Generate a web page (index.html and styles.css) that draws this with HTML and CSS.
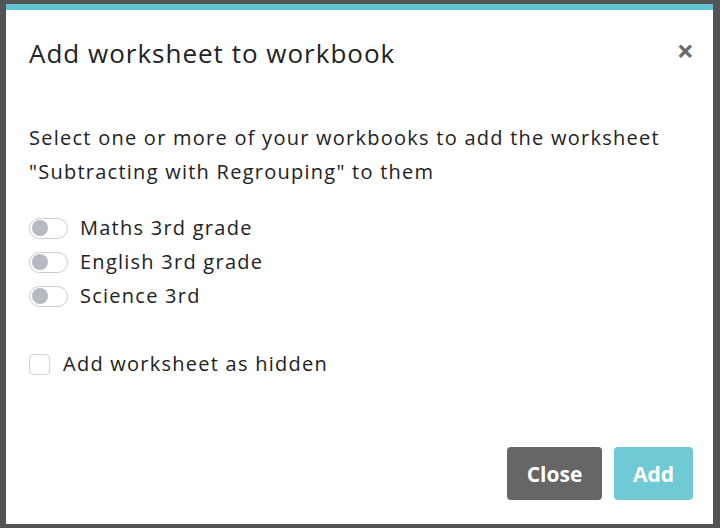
FILE: index.html
```html
<!DOCTYPE html>
<html lang="en">
<head>
<meta charset="utf-8">
<title>Add worksheet to workbook</title>
<link rel="stylesheet" href="styles.css">
</head>
<body>
<div class="backdrop">
  <div class="modal">
    <div class="modal-header">
      <h2 class="modal-title">Add worksheet to workbook</h2>
      <span class="close-x">&times;</span>
    </div>
    <div class="modal-body">
      <p class="intro">Select one or more of your workbooks to add the worksheet "Subtracting with Regrouping" to them</p>
      <ul class="switches">
        <li class="switch-row"><span class="switch"><span class="knob"></span></span><span class="switch-label">Maths 3rd grade</span></li>
        <li class="switch-row"><span class="switch"><span class="knob"></span></span><span class="switch-label">English 3rd grade</span></li>
        <li class="switch-row"><span class="switch"><span class="knob"></span></span><span class="switch-label">Science 3rd</span></li>
      </ul>
      <div class="check-row"><span class="checkbox"></span><span class="check-label">Add worksheet as hidden</span></div>
    </div>
    <div class="modal-footer">
      <button class="btn btn-close">Close</button>
      <button class="btn btn-add">Add</button>
    </div>
  </div>
</div>
</body>
</html>
```
FILE: styles.css
```css
html, body {
  margin: 0;
  padding: 0;
  height: 100%;
}
body {
  background: #545454;
  font-family: "Open Sans", "DejaVu Sans", sans-serif;
  color: #222;
}
.backdrop {
  height: 528px;
  padding: 4px 7px 4px 6px;
  box-sizing: border-box;
}
.modal {
  background: #fff;
  border-top: 6px solid #5ec4d2;
  height: 520px;
  box-sizing: border-box;
  display: flex;
  flex-direction: column;
}
.modal-header {
  display: flex;
  align-items: center;
  justify-content: space-between;
  padding: 24px 19px 0 23px;
}
.modal-title {
  margin: 0;
  font-size: 26px;
  font-weight: 400;
  letter-spacing: 1px;
  line-height: 38px;
  color: #222;
}
.close-x {
  font-size: 30px;
  font-weight: 700;
  color: #6b6b6b;
  line-height: 30px;
  margin-top: -4px;
}
.modal-body {
  padding: 49px 23px 0 23px;
}
.intro {
  margin: 0;
  font-size: 20px;
  letter-spacing: 1.25px;
  line-height: 34px;
  max-width: 660px;
}
.switches {
  list-style: none;
  margin: 22px 0 0;
  padding: 0;
}
.switch-row {
  display: flex;
  align-items: center;
  height: 34px;
}
.switch {
  width: 39px;
  height: 21px;
  box-sizing: border-box;
  border: 1px solid #c9ccd1;
  border-radius: 11px;
  display: flex;
  align-items: center;
  padding-left: 2px;
  margin-right: 12px;
}
.knob {
  width: 16px;
  height: 16px;
  border-radius: 50%;
  background: #b5b9c1;
}
.switch-label, .check-label {
  font-size: 20px;
  letter-spacing: 1.25px;
  line-height: 34px;
}
.check-row {
  display: flex;
  align-items: center;
  height: 34px;
  margin-top: 34px;
}
.checkbox {
  width: 21px;
  height: 21px;
  box-sizing: border-box;
  border: 1px solid #cfd2d6;
  border-radius: 4px;
  margin-right: 13px;
}
.modal-footer {
  margin-top: auto;
  display: flex;
  justify-content: flex-end;
  gap: 12px;
  padding: 0 20px 24px 0;
}
.btn {
  border: none;
  border-radius: 4px;
  height: 53px;
  font-family: "Open Sans", "DejaVu Sans", sans-serif;
  font-size: 21px;
  font-weight: 700;
  color: #fff;
  padding: 0 18px;
}
.btn-close {
  background: #666666;
  width: 95px;
}
.btn-add {
  background: #6fcad6;
  width: 79px;
}
```
